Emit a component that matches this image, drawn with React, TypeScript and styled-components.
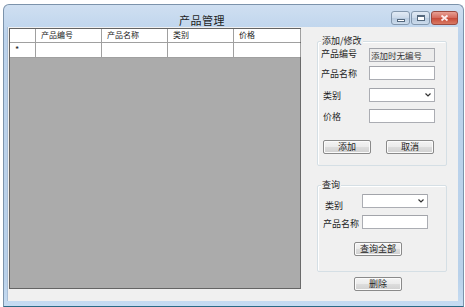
import React from 'react';
import styled, { createGlobalStyle } from 'styled-components';

const GlobalStyle = createGlobalStyle`
  html, body {
    margin: 0;
    padding: 0;
    background: #ffffff;
    overflow: hidden;
  }
  body {
    font-family: "Noto Sans CJK SC", "Noto Sans", sans-serif;
  }
`;

const columns = ['产品编号', '产品名称', '类别', '价格'];
const columnWidths = [66, 66, 66, 67];

const App: React.FC = () => {
  return (
    <>
      <GlobalStyle />
      <Window>
        <TitleBar>
          <Title>产品管理</Title>
          <Controls>
            <CtrlButton>
              <MinGlyph />
            </CtrlButton>
            <CtrlButton>
              <MaxGlyph />
            </CtrlButton>
            <CloseButton>
              <svg width="9" height="8" viewBox="0 0 9 8">
                <path d="M1.5 1.5 L7.5 6.5 M7.5 1.5 L1.5 6.5" stroke="#fbeeee" strokeWidth="1.8" />
              </svg>
            </CloseButton>
          </Controls>
        </TitleBar>
        <Client>
          <Grid>
            <HeaderRow>
              <RowHeaderCell />
              {columns.map((c, i) => (
                <HeaderCell key={c} style={{ width: columnWidths[i] }}>
                  {c}
                </HeaderCell>
              ))}
            </HeaderRow>
            <DataRow>
              <RowHeaderCell>*</RowHeaderCell>
              {columns.map((c, i) => (
                <DataCell key={c} style={{ width: columnWidths[i] }} />
              ))}
            </DataRow>
          </Grid>

          <Side>
            <Group height={125}>
              <Caption>添加/修改</Caption>
              <FormRow top={6} fieldLeft={48}>
                <Label dy={1}>产品编号</Label>
                <TextBox readOnlyLook>添加时无编号</TextBox>
              </FormRow>
              <FormRow top={4} fieldLeft={48}>
                <Label dy={3}>产品名称</Label>
                <TextBox />
              </FormRow>
              <FormRow top={8} fieldLeft={48}>
                <Label dy={3} indent={2}>类别</Label>
                <Combo>
                  <Chevron />
                </Combo>
              </FormRow>
              <FormRow top={7} fieldLeft={48}>
                <Label dy={3} indent={2}>价格</Label>
                <TextBox />
              </FormRow>
              <ButtonRow>
                <Button>添加</Button>
                <Button>取消</Button>
              </ButtonRow>
            </Group>

            <Group height={87} top={19}>
              <Caption>查询</Caption>
              <FormRow top={8} fieldLeft={41}>
                <Label dy={7} indent={4}>类别</Label>
                <Combo>
                  <Chevron />
                </Combo>
              </FormRow>
              <FormRow top={7} fieldLeft={41}>
                <Label dy={4} indent={2}>产品名称</Label>
                <TextBox />
              </FormRow>
              <CenterButton>
                <Button>查询全部</Button>
              </CenterButton>
            </Group>

            <DeleteRow>
              <Button>删除</Button>
            </DeleteRow>
          </Side>
        </Client>
      </Window>
    </>
  );
};

const Window = styled.div`
  box-sizing: border-box;
  width: 461px;
  height: 303px;
  margin: 4px 0 0 3px;
  border: 1px solid #7c93ab;
  border-bottom: 1px solid #2b6a86;
  border-radius: 6px 6px 0 0;
  background: linear-gradient(to bottom, #cfdff1 0%, #bcd3ec 10%, #b9d1ea 90%, #c6dcf2 100%);
  padding: 0 5px 5px 4px;
  display: flex;
  flex-direction: column;
`;

const TitleBar = styled.div`
  height: 22px;
  position: relative;
  display: flex;
  align-items: center;
  justify-content: center;
`;

const Title = styled.div`
  font-size: 11px;
  color: #1e1e1e;
  margin-top: 8px;
  margin-right: 62px;
  letter-spacing: 0.5px;
`;

const Controls = styled.div`
  position: absolute;
  right: 0;
  top: 6px;
  display: flex;
  gap: 1px;
`;

const CtrlButton = styled.div`
  box-sizing: border-box;
  width: 19px;
  height: 14px;
  border: 1px solid #8397ad;
  border-radius: 3px;
  background: linear-gradient(to bottom, #e2ebf5 0%, #cbd9e9 50%, #b8cbe0 51%, #cddcec 100%);
  display: flex;
  align-items: center;
  justify-content: center;
`;

const CloseButton = styled(CtrlButton)`
  width: 27px;
  border-color: #9a4a40;
  background: linear-gradient(to bottom, #e8a093 0%, #d4685a 50%, #c74a38 51%, #d97a64 100%);
`;

const MinGlyph = styled.div`
  box-sizing: border-box;
  width: 8px;
  height: 3px;
  margin-top: 4px;
  background: #fff;
  border: 1px solid #55697e;
`;

const MaxGlyph = styled.div`
  box-sizing: border-box;
  width: 8px;
  height: 6px;
  border: 1px solid #55697e;
  border-top-width: 2px;
  background: #fff;
`;

const Client = styled.div`
  flex: 1;
  background: #f0f0f0;
  display: flex;
  align-items: flex-start;
  padding: 1px 0 0 1px;
  border-left: 1px solid #a9bed6;
  margin-left: -1px;
`;

const Grid = styled.div`
  box-sizing: border-box;
  width: 292px;
  height: 261px;
  background: #ababab;
  border: 1px solid #646464;
  border-right-color: #6a6a6a;
  flex-shrink: 0;
`;

const HeaderRow = styled.div`
  display: flex;
  height: 13px;
  background: #ffffff;
  border-bottom: 1px solid #a0a0a0;
`;

const DataRow = styled.div`
  display: flex;
  height: 14px;
  background: #ffffff;
  border-bottom: 1px solid #a0a0a0;
`;

const RowHeaderCell = styled.div`
  box-sizing: border-box;
  width: 26px;
  border-right: 1px solid #a0a0a0;
  font-size: 9px;
  line-height: 14px;
  padding-left: 5px;
  color: #222;
  flex-shrink: 0;
`;

const HeaderCell = styled.div`
  box-sizing: border-box;
  border-right: 1px solid #a0a0a0;
  font-size: 8px;
  line-height: 11px;
  padding-left: 5px;
  color: #222;
  flex-shrink: 0;
  white-space: nowrap;
`;

const DataCell = styled.div`
  box-sizing: border-box;
  border-right: 1px solid #a0a0a0;
  flex-shrink: 0;
`;

const Side = styled.div`
  width: 130px;
  margin-left: 16px;
  display: flex;
  flex-direction: column;
  padding-top: 13px;
`;

const Group = styled.div<{ height: number; top?: number }>`
  box-sizing: border-box;
  position: relative;
  height: ${p => p.height}px;
  margin-top: ${p => p.top ?? 0}px;
  border: 1px solid #d5dfe5;
  border-radius: 2px;
  box-shadow: inset 1px 1px 0 #ffffff;
  display: flex;
  flex-direction: column;
`;

const Caption = styled.div`
  position: absolute;
  top: -7px;
  left: 3px;
  padding: 0 1px;
  background: #f0f0f0;
  font-size: 9px;
  line-height: 12px;
  color: #1e1e1e;
`;

const FormRow = styled.div<{ top: number; fieldLeft: number }>`
  display: grid;
  grid-template-columns: ${p => p.fieldLeft}px 66px;
  align-items: start;
  margin-top: ${p => p.top}px;
  padding-left: 3px;
  height: 14px;
`;

const Label = styled.div<{ dy: number; indent?: number }>`
  font-size: 9px;
  line-height: 10px;
  color: #1e1e1e;
  padding-top: ${p => p.dy}px;
  padding-left: ${p => p.indent ?? 0}px;
  white-space: nowrap;
`;

const TextBox = styled.div<{ readOnlyLook?: boolean }>`
  box-sizing: border-box;
  height: 14px;
  border: 1px solid #abadb3;
  border-top-color: #a2a4aa;
  background: ${p => (p.readOnlyLook ? '#ececec' : '#ffffff')};
  font-size: 8.5px;
  line-height: 12px;
  padding-left: 1px;
  color: #333;
  white-space: nowrap;
  overflow: hidden;
`;

const Combo = styled(TextBox)`
  display: flex;
  align-items: center;
  justify-content: flex-end;
  padding-right: 3px;
  border-radius: 1px;
`;

const Chevron = () => (
  <svg width="6" height="4" viewBox="0 0 6 4">
    <path d="M0.5 0.5 L3 3 L5.5 0.5" stroke="#333" strokeWidth="1.2" fill="none" />
  </svg>
);

const ButtonRow = styled.div`
  display: flex;
  justify-content: space-between;
  margin-top: 17px;
  padding: 0 12px 0 5px;
`;

const Button = styled.div`
  box-sizing: border-box;
  width: 48px;
  height: 14px;
  border: 1px solid #8a8a8a;
  border-radius: 2px;
  background: linear-gradient(to bottom, #f4f4f4 0%, #ebebeb 50%, #dddddd 51%, #d0d0d0 100%);
  box-shadow: inset 0 0 0 1px #fbfbfb;
  font-size: 9px;
  line-height: 12px;
  text-align: center;
  color: #1e1e1e;
`;

const CenterButton = styled.div`
  margin-top: 13px;
  padding-left: 36px;
`;

const DeleteRow = styled.div`
  margin-top: 5px;
  padding-left: 37px;
`;

export default App;
